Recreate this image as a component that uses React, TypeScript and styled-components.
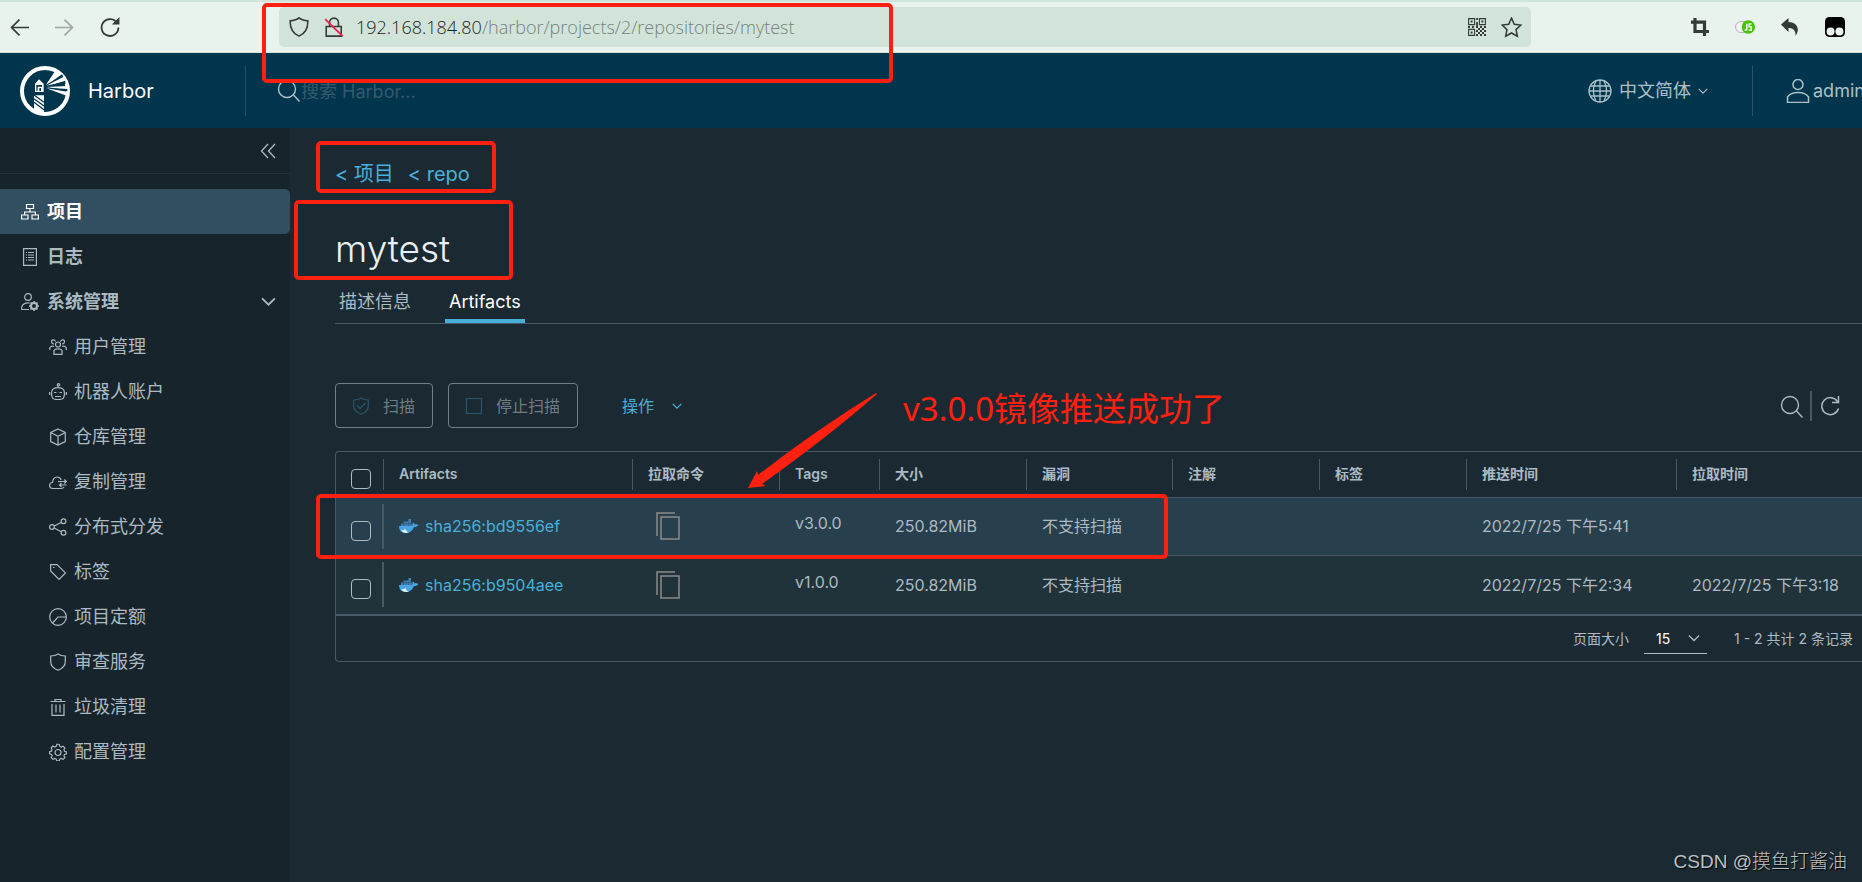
import React from "react";
import styled, { createGlobalStyle, css } from "styled-components";

const ui = `Inter, "Noto Sans CJK SC", sans-serif`;
const system = `"Noto Sans", "Noto Sans CJK SC", sans-serif`;

const color = {
  page: "#1b2a32",
  side: "#17242b",
  header: "#00364d",
  text: "#acbac3",
  bright: "#eaf0f3",
  link: "#49afd9",
  line: "#495865",
  mark: "#ff2010",
};

const GlobalStyle = createGlobalStyle`
  * { box-sizing: border-box; }
  body { margin: 0; background: ${color.page}; color: ${color.text}; font: 16px/24px ${ui}; overflow-x: hidden; }
  button, input, select { font: inherit; color: inherit; }
  button { padding: 0; border: 0; background: none; cursor: pointer; }
  a { color: inherit; text-decoration: none; }
`;

/* ---------- layout ---------- */

const Page = styled.div`
  position: relative;
  display: flex;
  flex-direction: column;
  min-height: 100vh;
  overflow: hidden;
`;

const Glyph = styled.svg<{ $size?: number; $w?: number; $weight?: number }>`
  flex: none;
  display: block;
  width: ${(p) => p.$w ?? p.$size ?? 18}px;
  height: ${(p) => p.$size ?? 18}px;
  fill: none;
  stroke: currentColor;
  stroke-width: ${(p) => p.$weight ?? 1.2};
`;

/* ---------- browser bar ---------- */

const BrowserBar = styled.div`
  display: flex;
  align-items: center;
  height: 53px;
  padding: 0 17px 0 10px;
  border-top: 2px solid #d2e4da;
  border-bottom: 1px solid #d2e4da;
  background: #e9f3ed;
  color: #333b37;
`;

const BarButtons = styled.div<{ $gap: number }>`
  display: flex;
  align-items: center;
  gap: ${(p) => p.$gap}px;
`;

const BarButton = styled.button<{ $dim?: boolean }>`
  display: block;
  opacity: ${(p) => (p.$dim ? 0.4 : 1)};
`;

const AddressBox = styled.div`
  display: flex;
  align-items: center;
  flex: 1;
  height: 40px;
  margin: 0 160px 0 159px;
  padding: 0 9px 0 10px;
  border-radius: 5px;
  background: #d2e4da;
`;

const Address = styled.div`
  flex: 1;
  margin-left: 12px;
  color: #76827b;
  font: 300 18px/24px "Open Sans", sans-serif;
  white-space: nowrap;
  b { color: #1c2420; font-weight: 300; }
`;

/* ---------- header ---------- */

const Header = styled.header`
  display: flex;
  align-items: center;
  height: 75px;
  padding-left: 20px;
  background: ${color.header};
`;

const Brand = styled.a`
  display: flex;
  align-items: center;
  gap: 18px;
  width: 225px;
  color: #fff;
  font-size: 20px;
`;

const SearchField = styled.label`
  display: flex;
  align-items: center;
  flex: 1;
  height: 50px;
  padding-left: 31px;
  border-left: 1px solid #22505f;
  color: #adc0c9;
`;

const SearchInput = styled.input`
  flex: 1;
  min-width: 0;
  padding: 2px 0 0;
  border: 0;
  outline: 0;
  background: none;
  font-size: 18px;
  &::placeholder { color: #34596c; opacity: 1; }
`;

const HeaderButton = styled.button<{ $account?: boolean }>`
  display: flex;
  align-items: center;
  gap: ${(p) => (p.$account ? 3 : 7)}px;
  height: 50px;
  color: #adc0c9;
  font-size: 18px;
  white-space: nowrap;
  ${(p) =>
    p.$account
      ? css`
          width: 110px;
          margin-left: 44px;
          padding-left: 33px;
          border-left: 1px solid #2d5466;
          overflow: hidden;
        `
      : ""}
`;

/* ---------- sidebar ---------- */

const Body = styled.div`
  display: flex;
  flex: 1;
`;

const Sidebar = styled.nav`
  flex: none;
  width: 290px;
  background: ${color.side};
`;

const CollapseRow = styled.div`
  display: flex;
  align-items: center;
  justify-content: flex-end;
  height: 46px;
  margin-bottom: 15px;
  padding-right: 14px;
  border-bottom: 1px solid #22323a;
`;

const NavLink = styled.a<{ $active?: boolean; $child?: boolean }>`
  display: flex;
  align-items: center;
  gap: ${(p) => (p.$child ? 7 : 8)}px;
  height: 45px;
  padding: 0 14px 0 ${(p) => (p.$child ? 49 : 21)}px;
  border-radius: 0 5px 5px 0;
  background: ${(p) => (p.$active ? "#324f61" : "transparent")};
  color: ${(p) => (p.$active ? "#fff" : color.text)};
  font-size: 18px;
  font-weight: ${(p) => (p.$child ? 400 : 700)};
`;

const NavText = styled.span`
  flex: 1;
  padding-top: 1px;
`;

/* ---------- main ---------- */

const Main = styled.main`
  flex: 1;
  min-width: 0;
  padding: 34px 0 0 45px;
`;

const Crumbs = styled.nav`
  display: flex;
  gap: 14px;
  color: ${color.link};
  font-size: 20px;
  line-height: 24px;
`;

const Title = styled.h1`
  margin: 39px 0 0;
  color: ${color.bright};
  font-size: 37px;
  font-weight: 300;
  line-height: 48px;
`;

const Tabs = styled.div`
  display: flex;
  gap: 30px;
  margin-top: 11px;
  border-bottom: 1px solid ${color.line};
`;

const Tab = styled.button<{ $active?: boolean }>`
  height: 39px;
  padding: 0 4px;
  border-bottom: 4px solid ${(p) => (p.$active ? color.link : "transparent")};
  color: ${(p) => (p.$active ? "#fff" : color.text)};
  font-size: 18px;
  line-height: 36px;
`;

const Toolbar = styled.div`
  display: flex;
  align-items: center;
  margin: 59px 22px 23px 0;
`;

const OutlineButton = styled.button`
  display: flex;
  align-items: center;
  gap: 13px;
  height: 45px;
  margin-right: 15px;
  padding: 0 17px 0 16px;
  border: 1px solid #747f85;
  border-radius: 4px;
  color: #727b80;
  svg { color: #28566a; }
`;

const ActionButton = styled.button`
  display: flex;
  align-items: center;
  gap: 18px;
  margin: 0 auto 0 29px;
  color: ${color.link};
`;

const ToolButton = styled.button<{ $first?: boolean }>`
  display: flex;
  align-items: center;
  height: 30px;
  padding: ${(p) => (p.$first ? "2px 6px 0 0" : "0 0 0 8px")};
  border-right: ${(p) => (p.$first ? `2px solid ${color.line}` : 0)};
`;

/* ---------- data grid ---------- */

const Grid = styled.section`
  border: 1px solid ${color.line};
  border-right: 0;
  border-radius: 4px 0 0 4px;
`;

const Table = styled.table`
  width: 100%;
  table-layout: fixed;
  border-collapse: collapse;
`;

const Col = styled.col<{ $w?: number }>`
  width: ${(p) => (p.$w ? `${p.$w}px` : "auto")};
`;

const HeadCell = styled.th`
  height: 45px;
  padding: 0;
  font-size: 14px;
  font-weight: 600;
  text-align: left;
`;

const HeadLabel = styled.div<{ $last?: boolean }>`
  display: flex;
  align-items: center;
  height: 31px;
  padding-left: 15px;
  border-right: ${(p) => (p.$last ? 0 : `1px solid ${color.line}`)};
`;

const Row = styled.tr<{ $hover?: boolean }>`
  height: 58px;
  border-top: 1px solid ${color.line};
  background: ${(p) => (p.$hover ? "#283f4d" : "#21333a")};
  &:last-child { height: 59px; }
`;

const Cell = styled.td`
  padding: 0 0 0 15px;
  white-space: nowrap;
`;

const TickCell = styled.td`
  padding: 0;
`;

const TickBox = styled.div`
  display: flex;
  height: 45px;
  padding: 17px 0 0 15px;
  border-right: 2px solid ${color.line};
`;

const Tick = styled.input`
  appearance: none;
  flex: none;
  width: 20px;
  height: 20px;
  margin: 0;
  border: 1px solid #acbac3;
  border-radius: 4px;
`;

const HeadTick = styled(Tick)`
  margin-top: 9px;
`;

const Digest = styled.a`
  display: flex;
  align-items: center;
  gap: 6px;
  color: ${color.link};
`;

const TagName = styled.div`
  padding-bottom: 6px;
`;

const CopyButton = styled.button`
  display: block;
  margin-left: 8px;
  color: #8a8a88;
`;

const GridFooter = styled.footer`
  display: flex;
  align-items: center;
  justify-content: flex-end;
  height: 47px;
  padding-right: 9px;
  border-top: 2px solid ${color.line};
  font-size: 14px;
`;

const PageSize = styled.label`
  display: flex;
  align-items: center;
  gap: 15px;
  margin-right: 27px;
`;

const SelectWrap = styled.span`
  display: grid;
  align-items: center;
  justify-items: end;
  width: 63px;
  height: 30px;
  border-bottom: 1px solid ${color.text};
  > * { grid-area: 1 / 1; }
  svg { margin-right: 7px; pointer-events: none; }
`;

const Select = styled.select`
  appearance: none;
  width: 100%;
  padding: 1px 0 0 12px;
  border: 0;
  outline: 0;
  background: none;
  color: #fff;
`;

/* ---------- annotations over the page ---------- */

const MarkBox = styled.div<{ $x: number; $y: number; $w: number; $h: number }>`
  position: absolute;
  left: ${(p) => p.$x}px;
  top: ${(p) => p.$y}px;
  width: ${(p) => p.$w}px;
  height: ${(p) => p.$h}px;
  border: 4px solid ${color.mark};
  border-radius: 5px;
  pointer-events: none;
`;

const MarkArrow = styled.svg`
  position: absolute;
  left: 748px;
  top: 392px;
  width: 132px;
  height: 98px;
  fill: ${color.mark};
  pointer-events: none;
`;

const MarkText = styled.div`
  position: absolute;
  left: 903px;
  top: 385px;
  color: ${color.mark};
  font: 33px/48px ${system};
  white-space: nowrap;
`;

const Watermark = styled.div`
  position: absolute;
  right: 15px;
  bottom: 6px;
  color: #bcc1c4;
  font: 300 19px/28px "Liberation Sans", "Noto Sans CJK SC", sans-serif;
  text-shadow: 1px 1px 1px #000;
`;

/* ---------- icons ---------- */

const Icon = ({ d, size, weight, box = 18, children }: {
  d?: string; size?: number; weight?: number; box?: number; children?: React.ReactNode;
}) => (
  <Glyph viewBox={`0 0 ${box} ${box}`} $size={size} $weight={weight} aria-hidden="true">
    {d && <path d={d} />}
    {children}
  </Glyph>
);

const ChevronDown = ({ size, weight }: { size: number; weight?: number }) => (
  <Icon box={14} size={size} weight={weight ?? 1.5} d="M1 4l6 6 6-6" />
);

const SearchIcon = () => (
  <Icon box={24} size={24} weight={1.4}><circle cx="10" cy="10" r="8.5" /><path d="M16.5 16l6 6.5" /></Icon>
);

const HarborLogo = () => (
  <Glyph viewBox="0 0 150 150" $size={50} $weight={12}>
    <circle cx="75" cy="75" r="69" />
    <g fill="#fff" stroke="none">
      <path d="M57 40l14 13v25H45V53z" />
      <path d="M42 88h30v54l-30-8z" />
      <path d="M78 56L104 17 128 30z" />
      <path d="M79 59L128 33l8 14z" />
      <path d="M79 63l62-3v13z" />
      <path d="M79 67l63 10v13z" />
    </g>
    <g fill="#00364d" stroke="none">
      <path d="M49 57h17v5H49zM49 62h4v12h-4zM58 66h5v9h-5z" />
      <path d="M80 57l46-32 4 8zM84 60l52-16v10zM84 65l58 4v7z" />
    </g>
    <path d="M42 98l30 22M42 109l30 22M42 87l30 22" stroke="#00364d" strokeWidth="4" />
  </Glyph>
);

const DockerIcon = () => (
  <Glyph viewBox="0 0 40 32" $w={20} $size={16}>
    <g stroke="none">
      <path fill="#3f83bd" d="M4 11h5V7h10V2h5v9h4v6H4z" />
      <path fill="#4aa3e3" d="M0 16h27c1-2 1-5 0-7 3 0 4 2 4 4 3-1 6-1 8 1-2 3-5 4-9 4-3 8-9 12-17 12C5 30 0 25 0 16z" />
      <path fill="#e6f3fb" d="M4 24c4 1 7 0 9-2 1 4 3 6 7 7-6 2-13 0-16-5z" />
    </g>
    <path d="M9 7v9M14 7v9M19 7v9M24 7v9M4 11.5h24" stroke="#2a4a60" strokeWidth="1" />
  </Glyph>
);

const CopyIcon = () => (
  <Glyph viewBox="0 0 24 28" $w={24} $size={28} $weight={1.5}>
    <path d="M1 24V1h18" /><rect x="5" y="5" width="18" height="22" />
  </Glyph>
);

const QrIcon = () => (
  <Glyph viewBox="0 0 18 18" $size={18} $weight={1.1}>
    <path d="M.6.6h6v6h-6zM11.4.6h6v6h-6zM.6 11.4h6v6h-6z" />
    <path d="M2.600 3.600h2M13.400 3.600h2M2.600 14.400h2" strokeWidth="2" />
    <path d="M9 0v2M9 4v4M0 9h2M4 9h2M8 9h2M12 9h2M16 9h2M10 11h2M14 11h2M8 13h2M12 13h2M16 13h2M10 15h2M14 15h2M8 17h2M12 17h2M16 17h2" strokeWidth="1.800" />
  </Glyph>
);

const gear = "M9 1l1.5.2.5 2 1.5.7 1.9-1 1.8 1.9-1 1.8.6 1.5 2 .6v2l-2 .6-.6 1.5 1 1.8-1.8 1.8-1.9-1-1.5.7-.5 1.9H8l-.6-1.9-1.5-.7-1.9 1-1.8-1.8 1-1.8-.7-1.5-1.9-.6V8.5l1.9-.5.7-1.5-1-1.9L4 2.800l1.9 1 1.5-.7L8 1z";

const shield = "M9 1c2 1.500 5 2 7.300 2v6c0 4-3 6.500-7.300 8.300C4.700 15.500 1.700 13 1.700 9V3C4 3 7 2.500 9 1z";

const icons = {
  projects: <Icon><path d="M5.500 1.500h7v4h-7zM.6 12h6.400v4H.6zM11 12h6.400v4H11zM9 5.500v3M3.600 12V9h10.800v3" /></Icon>,
  logs: <Icon><path d="M2.600.6h12.800v16.800H2.600zM5 4.500h1M7 4.500h6M5 7h1M7 7h6M5 9.500h1M7 9.500h6M5 12h1M7 12h6" /></Icon>,
  admin: <Icon><circle cx="7" cy="4" r="3.300" /><path d="M8 16.500H.7V14c1-3 4-4.500 8-4" /><circle cx="13" cy="13" r="3" strokeWidth="2" /><path d="M13 8v2M13 16v2M8 13h2M16 13h2M9.500 9.500l1.500 1.500M15 15l1.500 1.500M16.500 9.500L15 11M11 15l-1.500 1.500" strokeWidth="1.600" /></Icon>,
  users: <Icon><circle cx="9" cy="6.500" r="2.500" /><path d="M5 16.400v-4c1-2 7-2 8 0v4zM6.500 3.500C5 .5 2 2 2.500 4c.2 1.500 1.500 2 2.500 2M11.500 3.500c1.500-3 4.500-1.500 4 .5-.2 1.500-1.500 2-2.500 2M.8 12V9.500C2 8 3.500 8 5 8.500M17.200 12V9.500C16 8 14.500 8 13 8.500" /></Icon>,
  robot: <Icon><circle cx="9.500" cy="1.800" r="1.200" /><path d="M9 3v1.500M3.500 6.500c2-2.600 9-2.600 11 0 1 2 1 6 0 8.500-1 2-10 2-11 0-1-2.500-1-6.500 0-8.500zM.6 9v3M17.400 9v3M5 9.500h2.500M10.500 9.500H13M6 13.500h6" /></Icon>,
  registry: <Icon d="M9 1l7.300 3.500v9L9 17l-7.300-3.500v-9zM1.700 4.500L9 8.300l7.300-3.800M9 8.300V17" />,
  replicate: <Icon><path d="M15 14c-.5 1-1.500 1.500-3 1.500H4C1.500 15.500.6 14 .6 12.500.6 10.500 2 9.500 3.500 9.500 3.500 6.500 5.500 4 8 4c2 0 3.500 1 4.200 3M9 8.500h8M15.300 6.500l2 2-2 2M17.500 12h-7M12.500 10l-2 2 2 2" /></Icon>,
  share: <Icon><circle cx="3" cy="9" r="2.400" /><circle cx="14.500" cy="3.300" r="2.400" /><circle cx="14.500" cy="14.800" r="2.400" /><path d="M5.200 8l7-3.500M5.200 10l7 3.700" /></Icon>,
  tag: <Icon><path d="M1.600 1.600h6.500l8.300 8.300-6.300 6.500L1.600 8z" /><path d="M4 4.500h1.500" /></Icon>,
  quota: <Icon><circle cx="9" cy="9" r="8.300" /><path d="M17 9H9l-5.500 6" /></Icon>,
  shield: <Icon d={shield} />,
  trash: <Icon d="M1.500 3.500h15M6 3.500v-2h6v2M3 6v11.300h12V6M7 6.500v8M11 6.500v8" />,
  config: <Icon><path d={gear} transform="translate(0 .3) scale(.98)" /><circle cx="9" cy="9.500" r="3" /></Icon>,
};

/* ---------- data ---------- */

const topNav = [
  { text: "项目", icon: icons.projects, active: true },
  { text: "日志", icon: icons.logs },
  { text: "系统管理", icon: icons.admin, open: true },
];

const subNav = [
  { text: "用户管理", icon: icons.users },
  { text: "机器人账户", icon: icons.robot },
  { text: "仓库管理", icon: icons.registry },
  { text: "复制管理", icon: icons.replicate },
  { text: "分布式分发", icon: icons.share },
  { text: "标签", icon: icons.tag },
  { text: "项目定额", icon: icons.quota },
  { text: "审查服务", icon: icons.shield },
  { text: "垃圾清理", icon: icons.trash },
  { text: "配置管理", icon: icons.config },
];

const columns = [
  { text: "Artifacts", width: 249 },
  { text: "拉取命令", width: 147 },
  { text: "Tags", width: 100 },
  { text: "大小", width: 147 },
  { text: "漏洞", width: 146 },
  { text: "注解", width: 147 },
  { text: "标签", width: 147 },
  { text: "推送时间", width: 210 },
  { text: "拉取时间", width: undefined },
];

const artifacts = [
  { digest: "sha256:bd9556ef", tag: "v3.0.0", size: "250.82MiB", scan: "不支持扫描", pushed: "2022/7/25 下午5:41", pulled: "", hover: true },
  { digest: "sha256:b9504aee", tag: "v1.0.0", size: "250.82MiB", scan: "不支持扫描", pushed: "2022/7/25 下午2:34", pulled: "2022/7/25 下午3:18", hover: false },
];

/* ---------- sections ---------- */

const Browser = () => (
  <BrowserBar>
    <BarButtons $gap={26}>
      <BarButton aria-label="Back"><Icon size={19} weight={1.6} d="M18 9H1.500M9 1.500L1.500 9 9 16.500" /></BarButton>
      <BarButton aria-label="Forward" $dim><Icon size={19} weight={1.6} d="M0 9h16.500M9 1.500L16.500 9 9 16.500" /></BarButton>
      <BarButton aria-label="Reload">
        <Icon size={20} weight={1.6}><path d="M15.500 5.500A7.600 7.600 0 1 0 16.600 9.500" /><path d="M17.500 0v6.800h-6.800z" fill="currentColor" stroke="none" /></Icon>
      </BarButton>
    </BarButtons>
    <AddressBox>
      <BarButtons $gap={15}>
        <Icon size={20} weight={1.4} d="M9 .8c2 1.700 5 2.400 8 2.700 0 6-1.500 11-8 13.700C2.500 14.500 1 9.500 1 3.500 4 3.200 7 2.500 9 .8z" />
        <Icon size={20} weight={1.4}>
          <path d="M2 8.500h13.500v8.700H2zM5 8.500V5a4 4 0 0 1 8 0v3.500" /><path d="M1 2l16 15.500" stroke="#f0204f" strokeWidth="1.600" />
        </Icon>
      </BarButtons>
      <Address><b>192.168.184.80</b>/harbor/projects/2/repositories/mytest</Address>
      <BarButtons $gap={15}>
        <BarButton aria-label="QR code"><QrIcon /></BarButton>
        <BarButton aria-label="Bookmark">
          <Icon size={21} weight={1.3} d="M9 1l2.400 5.200 5.700.7-4.200 3.900 1.100 5.700L9 13.700l-5 2.800 1.100-5.700L.9 6.900l5.700-.7z" />
        </BarButton>
      </BarButtons>
    </AddressBox>
    <BarButtons $gap={26}>
      <BarButton aria-label="Crop"><Icon size={18} weight={3.2} d="M4 0v13.500h14M0 4.200h13.500V18" /></BarButton>
      <BarButton aria-label="JavaScript switch">
        <Icon size={20} weight={0.8}>
          <rect x=".5" y="4" width="14" height="10" rx="5" fill="#f4f4f4" stroke="#aaa" />
          <circle cx="12" cy="9" r="6" fill="#43c400" stroke="none" />
          <path d="M10.600 6v5q0 1-2 .7M15 6.200h-2.300v2.600h2V12h-2.500" stroke="#fff" strokeWidth="1.300" />
        </Icon>
      </BarButton>
      <BarButton aria-label="Undo"><Icon size={18}><path fill="currentColor" stroke="none" d="M0 6.500L7.500 0v4C15 4 20 10 14.500 18c.5-5-2-8-7-8v4z" /></Icon></BarButton>
      <BarButton aria-label="Scripts">
        <Icon size={20}><rect width="18" height="18" rx="4" fill="#000" stroke="none" /><circle cx="5" cy="13" r="3.600" fill="#e9f3ed" stroke="none" /><circle cx="13" cy="13" r="3.600" fill="#e9f3ed" stroke="none" /></Icon>
      </BarButton>
    </BarButtons>
  </BrowserBar>
);

const TopHeader = () => (
  <Header>
    <Brand href="#"><HarborLogo />Harbor</Brand>
    <SearchField>
      <SearchIcon />
      <SearchInput placeholder="搜索 Harbor..." aria-label="搜索 Harbor" />
    </SearchField>
    <HeaderButton>
      <Icon box={24} size={24} weight={1.3}>
        <circle cx="12" cy="12" r="11" /><path d="M12 1v22M3 7h18M1 12h22M3 17h18M8 2C4.500 8 4.500 16 8 22M16 2c3.500 6 3.500 14 0 20" />
      </Icon>
      中文简体
      <ChevronDown size={10} />
    </HeaderButton>
    <HeaderButton $account>
      <Icon box={24} size={24} weight={1.5}><circle cx="12" cy="5.500" r="5" /><path d="M1.500 23.500V18c4-6 17-6 21 0v5.500z" /></Icon>
      admin
    </HeaderButton>
  </Header>
);

const SideNav = () => (
  <Sidebar>
    <CollapseRow>
      <BarButton aria-label="收起"><Icon size={16} box={16} weight={1.3} d="M8 1L1.500 8 8 15M15 1L8.500 8l6.500 7" /></BarButton>
    </CollapseRow>
    {topNav.map((n) => (
      <NavLink key={n.text} href="#" $active={n.active}>
        {n.icon}<NavText>{n.text}</NavText>{n.open && <ChevronDown size={15} weight={1.7} />}
      </NavLink>
    ))}
    {subNav.map((n) => (
      <NavLink key={n.text} href="#" $child>{n.icon}<NavText>{n.text}</NavText></NavLink>
    ))}
  </Sidebar>
);

const ArtifactGrid = () => (
  <Grid>
    <Table>
      <colgroup>
        <Col $w={48} />
        {columns.map((c) => <Col key={c.text} $w={c.width} />)}
      </colgroup>
      <thead>
        <tr>
          <HeadCell><HeadLabel><HeadTick type="checkbox" aria-label="全选" /></HeadLabel></HeadCell>
          {columns.map((c, i) => (
            <HeadCell key={c.text}><HeadLabel $last={i === columns.length - 1}>{c.text}</HeadLabel></HeadCell>
          ))}
        </tr>
      </thead>
      <tbody>
        {artifacts.map((a) => (
          <Row key={a.digest} $hover={a.hover}>
            <TickCell><TickBox><Tick type="checkbox" aria-label={a.digest} /></TickBox></TickCell>
            <Cell><Digest href="#"><DockerIcon />{a.digest}</Digest></Cell>
            <Cell><CopyButton aria-label="拉取命令"><CopyIcon /></CopyButton></Cell>
            <Cell><TagName>{a.tag}</TagName></Cell>
            <Cell>{a.size}</Cell>
            <Cell>{a.scan}</Cell>
            <Cell />
            <Cell />
            <Cell>{a.pushed}</Cell>
            <Cell>{a.pulled}</Cell>
          </Row>
        ))}
      </tbody>
    </Table>
    <GridFooter>
      <PageSize>
        页面大小
        <SelectWrap>
          <Select defaultValue="15"><option>15</option><option>25</option><option>50</option></Select>
          <ChevronDown size={12} />
        </SelectWrap>
      </PageSize>
      1 - 2 共计 2 条记录
    </GridFooter>
  </Grid>
);

const App = () => (
  <Page>
    <GlobalStyle />
    <Browser />
    <TopHeader />
    <Body>
      <SideNav />
      <Main>
        <Crumbs><a href="#">&lt; 项目</a><a href="#">&lt; repo</a></Crumbs>
        <Title>mytest</Title>
        <Tabs>
          <Tab>描述信息</Tab>
          <Tab $active>Artifacts</Tab>
        </Tabs>
        <Toolbar>
          <OutlineButton>
            <Icon><path d={shield} /><path d="M5 8.500l3 3 5.500-5.500" /></Icon>
            扫描
          </OutlineButton>
          <OutlineButton>
            <Icon d="M1.500 1.500h15v15h-15z" />
            停止扫描
          </OutlineButton>
          <ActionButton>操作<ChevronDown size={10} weight={1.8} /></ActionButton>
          <ToolButton $first aria-label="搜索"><SearchIcon /></ToolButton>
          <ToolButton aria-label="刷新"><Icon box={20} size={20} weight={1.5} d="M18.500 12.500A8.500 8.500 0 1 1 17.500 5.500M18.500 0v6.500H12" /></ToolButton>
        </Toolbar>
        <ArtifactGrid />
      </Main>
    </Body>
    <MarkBox $x={262} $y={3} $w={631} $h={80} />
    <MarkBox $x={316} $y={141} $w={180} $h={52} />
    <MarkBox $x={294} $y={200} $w={219} $h={80} />
    <MarkBox $x={316} $y={494} $w={852} $h={65} />
    <MarkArrow viewBox="0 0 132 98"><path d="M0 96L9 79l1 4Q68 38 128 1l1 1Q80 45 14 92l4 2z" /></MarkArrow>
    <MarkText>v3.0.0镜像推送成功了</MarkText>
    <Watermark>CSDN @摸鱼打酱油</Watermark>
  </Page>
);

export default App;
